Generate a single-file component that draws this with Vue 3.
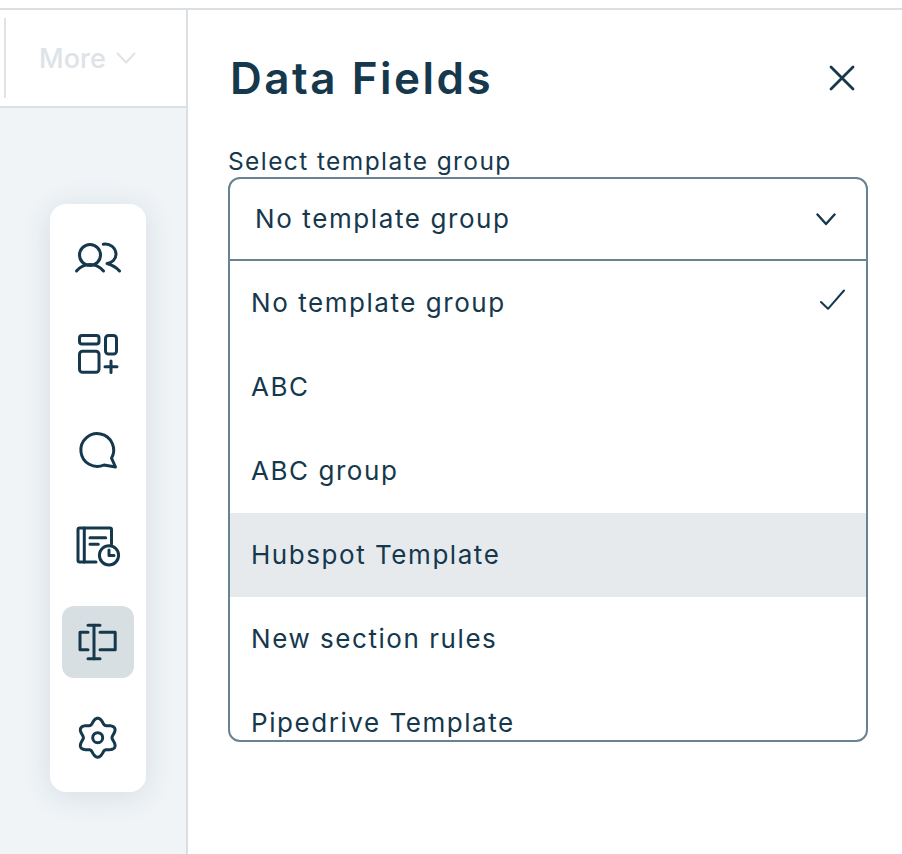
<script setup>
const options = [
  { label: 'No template group', checked: true },
  { label: 'ABC' },
  { label: 'ABC group' },
  { label: 'Hubspot Template', hovered: true },
  { label: 'New section rules' },
  { label: 'Pipedrive Template' },
]

const gearPath = (() => {
  const points = []
  for (let i = 0; i < 120; i++) {
    const a = (i / 120) * Math.PI * 2
    const r = 16.9 + 2.6 * Math.cos(6 * a)
    const x = 23.7 + r * Math.sin(a)
    const y = 23.7 - r * Math.cos(a)
    points.push(`${x.toFixed(2)} ${y.toFixed(2)}`)
  }
  return 'M' + points.join('L') + 'Z'
})()
</script>

<template>
  <div class="page">
    <div class="left">
      <div class="tabs">
        <span class="divider"></span>
        <span class="more">More
          <svg class="more-chev" width="20" height="12" viewBox="0 0 20 12" fill="none">
            <path d="M1.5 1.5 10 10.5 18.5 1.5" />
          </svg>
        </span>
      </div>
      <div class="rail-area">
        <nav class="rail">
          <div class="rail-item">
            <svg viewBox="0 0 48 48" class="icon">
              <circle cx="16" cy="21" r="10.5" />
              <path d="M2.5 37C6 33 10 30.5 16 30.5S26 33 29.5 37" />
              <path d="M29.3 10.2C36 9 42 14 42 20.5C42 25 38 29 33 29.5C38 31 42.5 33.5 45.5 37" />
            </svg>
          </div>
          <div class="rail-item">
            <svg viewBox="0 0 48 48" class="icon">
              <rect x="5.5" y="5.5" width="19.5" height="8.5" rx="2.5" />
              <rect x="5.5" y="21.2" width="19.5" height="21" rx="3" />
              <rect x="31.5" y="5.5" width="11" height="18.5" rx="3" />
              <path d="M37 31V42.5M31 36.7H43" />
            </svg>
          </div>
          <div class="rail-item">
            <svg viewBox="0 0 48 48" class="icon">
              <path d="M37.5 32.2A16.4 16.4 0 1 0 30 39L41.5 41Z" />
            </svg>
          </div>
          <div class="rail-item">
            <svg viewBox="0 0 48 48" class="icon">
              <path d="M37.5 22V7.5A1.5 1.5 0 0 0 36 6H5.5A1.5 1.5 0 0 0 4 7.5V38.5A1.5 1.5 0 0 0 5.5 40H22" />
              <path d="M10.3 6V40M16 15.7H31.7M16 22.3H24.3" />
              <circle cx="35" cy="33.3" r="9.6" />
              <path d="M35 28V33.5H40" />
            </svg>
          </div>
          <div class="rail-item active">
            <svg viewBox="0 0 48 48" class="icon">
              <path d="M20 7V41M14 7.2H26M14 40.8H26" />
              <path d="M14 14.3H6V31.7H14M26 14.3H41.2V31.7H26" />
            </svg>
          </div>
          <div class="rail-item">
            <svg viewBox="0 0 48 48" class="icon">
              <path :d="gearPath" />
              <circle cx="23.7" cy="23.7" r="5" />
            </svg>
          </div>
        </nav>
      </div>
    </div>

    <aside class="panel">
      <header class="panel-head">
        <h1>Data Fields</h1>
        <svg class="close" width="28" height="28" viewBox="0 0 28 28">
          <path d="M3 3 25 25M25 3 3 25" />
        </svg>
      </header>
      <div class="label">Select template group</div>
      <div class="select">
        <div class="trigger">
          <span>No template group</span>
          <svg width="20" height="13" viewBox="0 0 20 13" class="chev">
            <path d="M1.5 1.5 10 11 18.5 1.5" />
          </svg>
        </div>
        <ul class="list">
          <li v-for="o in options" :key="o.label" :class="{ hovered: o.hovered }">
            <span>{{ o.label }}</span>
            <svg v-if="o.checked" width="26" height="22" viewBox="0 0 26 22" class="check">
              <path d="M1 13 8 19.8 24 1.5" />
            </svg>
          </li>
        </ul>
      </div>
    </aside>
  </div>
</template>

<style>
html, body {
  margin: 0;
  background: #fff;
}
</style>

<style scoped>
.page {
  box-sizing: border-box;
  width: 902px;
  height: 846px;
  margin-top: 8px;
  overflow: hidden;
  display: flex;
  border-top: 2px solid #d9dfe3;
  font-family: Inter, "Liberation Sans", sans-serif;
  color: #15384d;
}
.left {
  box-sizing: border-box;
  width: 188px;
  flex: none;
  display: flex;
  flex-direction: column;
  border-right: 2px solid #d9dfe3;
}
.tabs {
  box-sizing: border-box;
  height: 98px;
  flex: none;
  display: flex;
  align-items: center;
  padding-left: 4px;
  background: #fff;
  border-bottom: 2px solid #d9dfe3;
}
.divider {
  width: 2px;
  height: 80px;
  background: #dfe4e7;
}
.more {
  margin-left: 33px;
  display: flex;
  align-items: center;
  gap: 10px;
  font-size: 27px;
  font-weight: 500;
  color: #dde3e7;
}
.more-chev {
  fill: none;
  stroke: #dde3e7;
  stroke-width: 2;
  stroke-linecap: round;
  stroke-linejoin: round;
}
.rail-area {
  flex: 1;
  background: #f0f4f7;
  padding: 96px 0 0 50px;
}
.rail {
  box-sizing: border-box;
  width: 96px;
  height: 588px;
  padding: 18px 12px;
  display: flex;
  flex-direction: column;
  gap: 24px;
  background: #fff;
  border-radius: 16px;
  box-shadow: 0 4px 30px rgba(22, 58, 80, 0.12);
}
.rail-item {
  width: 72px;
  height: 72px;
  display: flex;
  align-items: center;
  justify-content: center;
  border-radius: 12px;
}
.rail-item.active {
  background: #d8dfe3;
}
.icon {
  width: 48px;
  height: 48px;
  fill: none;
  stroke: #15384d;
  stroke-width: 3;
  stroke-linecap: round;
  stroke-linejoin: round;
}
.panel {
  flex: 1;
  box-sizing: border-box;
  padding: 0 34px 0 40px;
}
.panel-head {
  display: flex;
  align-items: center;
  justify-content: space-between;
  height: 136px;
}
.panel-head h1 {
  margin: 0 0 0 2px;
  font-size: 44px;
  font-weight: 600;
  letter-spacing: 2.5px;
  line-height: 50px;
}
.close {
  margin-right: 12px;
  fill: none;
  stroke: #15384d;
  stroke-width: 2.8;
  stroke-linecap: round;
}
.label {
  height: 31px;
  line-height: 31px;
  font-size: 24.5px;
  letter-spacing: 1.4px;
}
.select {
  box-sizing: border-box;
  width: 640px;
  height: 565px;
  border: 2px solid #688390;
  border-radius: 12px;
  overflow: hidden;
  display: flex;
  flex-direction: column;
}
.trigger {
  box-sizing: border-box;
  height: 82px;
  flex: none;
  display: flex;
  align-items: center;
  justify-content: space-between;
  padding: 0 30px 0 25px;
  font-size: 26px;
  letter-spacing: 1.6px;
  border-bottom: 2px solid #688390;
}
.trigger span {
  margin-top: -2px;
}
.chev, .check {
  fill: none;
  stroke: #15384d;
  stroke-linecap: round;
  stroke-linejoin: round;
}
.chev {
  stroke-width: 2.4;
}
.check {
  stroke-width: 2;
  position: relative;
  top: -3px;
}
.list {
  list-style: none;
  margin: 0;
  padding: 0;
  flex: 1;
  overflow: hidden;
}
.list li {
  box-sizing: border-box;
  height: 84px;
  display: flex;
  align-items: center;
  justify-content: space-between;
  padding: 0 20px 0 21px;
  font-size: 26px;
  letter-spacing: 1.55px;
}
.list li span {
  margin-top: -2px;
}
.list li.hovered {
  background: #e6eaed;
}
</style>
